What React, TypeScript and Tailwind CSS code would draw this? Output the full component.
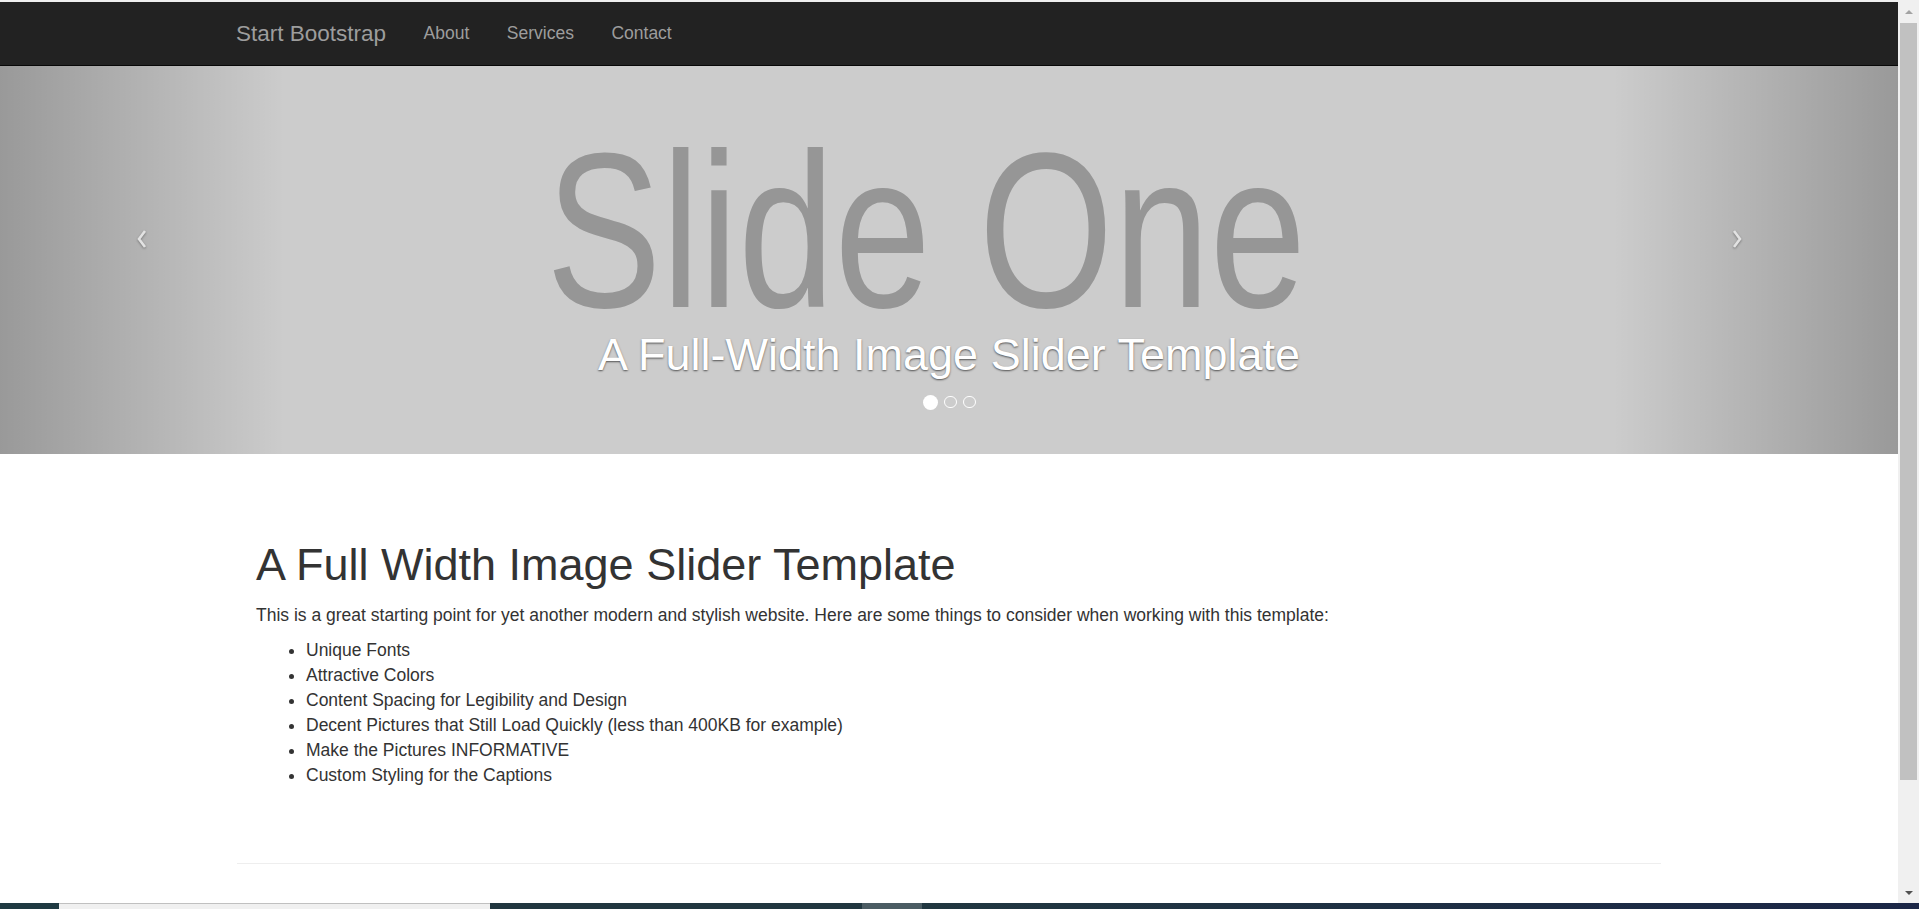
const links = ['About', 'Services', 'Contact'];

const features = [
  'Unique Fonts',
  'Attractive Colors',
  'Content Spacing for Legibility and Design',
  'Decent Pictures that Still Load Quickly (less than 400KB for example)',
  'Make the Pictures INFORMATIVE',
  'Custom Styling for the Captions',
];

function Navbar() {
  return (
    <nav className="h-[64px] border-b border-[#080808] bg-[#222]">
      <div className="mx-auto flex h-full w-[1462px] items-center px-[18px]">
        <a href="#" className="pr-[18.75px] text-[22.5px] leading-[25px] text-[#9d9d9d]">
          Start Bootstrap
        </a>
        {links.map((l) => (
          <a key={l} href="#" className="px-[18.75px] text-[17.5px] leading-[25px] text-[#9d9d9d]">
            {l}
          </a>
        ))}
      </div>
    </nav>
  );
}

function Chevron({ dir }: { dir: 'left' | 'right' }) {
  return (
    <svg width="12" height="20" viewBox="0 0 12 20" className="drop-shadow-[0_1px_1px_rgba(0,0,0,0.35)]">
      <polyline
        points={dir === 'left' ? '9,2 3,10 9,18' : '3,2 9,10 3,18'}
        fill="none"
        stroke="#e2e2e2"
        strokeWidth="2.6"
        strokeLinejoin="miter"
      />
    </svg>
  );
}

function Carousel() {
  return (
    <header className="relative h-[388px] overflow-hidden bg-[#ccc]">
      {/* placeholder image text */}
      <div className="absolute left-[546px] top-[54px] origin-left scale-x-[0.783] whitespace-nowrap text-[221px] leading-none text-[#969696]">
        Slide One
      </div>

      <div className="absolute inset-y-0 left-0 w-[15%] bg-linear-to-r from-black/25 to-transparent" />
      <div className="absolute inset-y-0 right-0 w-[15%] bg-linear-to-l from-black/25 to-transparent" />

      <a href="#" className="absolute left-[136px] top-[163px]">
        <Chevron dir="left" />
      </a>
      <a href="#" className="absolute left-[1731px] top-[163px]">
        <Chevron dir="right" />
      </a>

      <div className="absolute inset-x-0 top-[264px] flex flex-col items-center">
        <h2 className="text-[45px] leading-[1.1] text-white [text-shadow:0_1px_2px_rgba(0,0,0,0.6)]">
          A Full-Width Image Slider Template
        </h2>
        <div className="mt-[15px] flex items-center gap-[6.5px]">
          <span className="h-[15px] w-[15px] rounded-full bg-white" />
          <span className="h-[12.5px] w-[12.5px] rounded-full border border-white" />
          <span className="h-[12.5px] w-[12.5px] rounded-full border border-white" />
        </div>
      </div>
    </header>
  );
}

function Scrollbar() {
  return (
    <div className="flex w-[21px] flex-col items-center bg-[#f0f0f0]">
      <div className="flex h-[23px] items-center justify-center">
        <div className="h-0 w-0 border-x-[4px] border-b-[4px] border-x-transparent border-b-[#a3a3a3]" />
      </div>
      <div className="h-[757px] w-[17px] bg-[#c1c1c1]" />
      <div className="flex flex-1 items-end justify-center pb-[8px]">
        <div className="h-0 w-0 border-x-[4px] border-t-[4px] border-x-transparent border-t-[#505050]" />
      </div>
    </div>
  );
}

function Taskbar() {
  return (
    <div className="flex h-[6px]">
      <div className="w-[59px] bg-[#1f3a42]" />
      <div className="w-[431px] border-t border-[#c0c0c0] bg-[#f0f0f0]" />
      <div className="w-[372px] bg-[#213740]" />
      <div className="w-[60px] bg-[#4b5c63]" />
      <div className="flex-1 bg-linear-to-r from-[#213740] to-[#1b2646]" />
    </div>
  );
}

export default function App() {
  return (
    <div className="flex h-[909px] w-[1919px] flex-col overflow-hidden bg-white font-['Liberation_Sans',Arial,sans-serif] text-[#333]">
      <div className="flex h-[903px]">
        <div className="flex w-[1898px] flex-col overflow-hidden">
          <div className="h-[2px] bg-[#f0f0f0]" />
          <Navbar />
          <Carousel />

          <div className="mx-auto w-[1462px] px-[19px]">
            <div className="px-[19px]">
              <h1 className="mt-[86px] text-[45px] leading-[1.1]">A Full Width Image Slider Template</h1>
              <p className="mt-[13px] text-[17.5px] leading-[25px]">
                This is a great starting point for yet another modern and stylish website. Here are some things to
                consider when working with this template:
              </p>
              <ul className="mt-[10px] list-disc pl-[50px] text-[17.5px] leading-[25px]">
                {features.map((f) => (
                  <li key={f}>{f}</li>
                ))}
              </ul>
            </div>
            <hr className="mt-[75px] border-t border-[#eee]" />
          </div>
        </div>
        <Scrollbar />
      </div>
      <Taskbar />
    </div>
  );
}
